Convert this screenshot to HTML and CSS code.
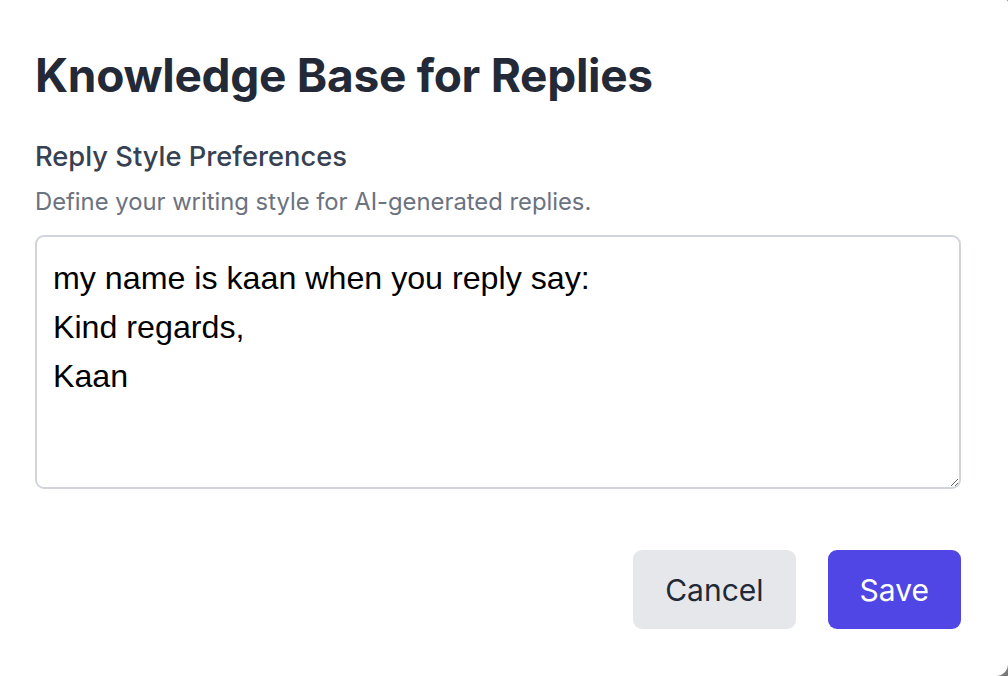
FILE: index.html
```html
<!DOCTYPE html>
<html lang="en">
<head>
<meta charset="utf-8">
<title>Knowledge Base for Replies</title>
<link rel="stylesheet" href="styles.css">
</head>
<body>
<div class="dialog">
  <h1 class="title">Knowledge Base for Replies</h1>
  <div class="field">
    <label class="label" for="style">Reply Style Preferences</label>
    <p class="hint">Define your writing style for AI-generated replies.</p>
    <textarea id="style" class="input">my name is kaan when you reply say:
Kind regards,
Kaan</textarea>
  </div>
  <div class="actions">
    <button class="btn btn-cancel">Cancel</button>
    <button class="btn btn-save">Save</button>
  </div>
</div>
</body>
</html>
```

FILE: styles.css
```css
html, body {
  margin: 0;
  padding: 0;
  height: 100%;
}
body {
  background: #7a7a7a;
  font-family: Inter, "Liberation Sans", sans-serif;
}
.dialog {
  box-sizing: border-box;
  width: 1008px;
  height: 676px;
  background: #ffffff;
  border-top-right-radius: 2px;
  border-bottom-right-radius: 12px;
  padding: 47px 47px 0 35px;
  display: flex;
  flex-direction: column;
}
.title {
  margin: 0;
  font-size: 46px;
  line-height: 56px;
  font-weight: 700;
  color: #232936;
  letter-spacing: -0.28px;
}
.field {
  margin-top: 36px;
  display: flex;
  flex-direction: column;
}
.label {
  font-size: 27.3px;
  line-height: 36px;
  font-weight: 500;
  color: #374151;
}
.hint {
  margin: 11px 0 0;
  font-size: 23.8px;
  line-height: 32px;
  color: #6b7280;
}
.input {
  margin-top: 17px;
  box-sizing: border-box;
  width: 926px;
  height: 254px;
  border: 2px solid #d1d5db;
  border-radius: 9px;
  padding: 17px 16px;
  font-family: "Liberation Sans", Arial, sans-serif;
  font-size: 32.2px;
  line-height: 49px;
  color: #000000;
  resize: vertical;
  outline: none;
}
.actions {
  margin-top: 61px;
  display: flex;
  justify-content: flex-end;
  gap: 32px;
}
.btn {
  height: 79px;
  border: none;
  border-radius: 9px;
  padding: 0 32px;
  font-family: Inter, "Liberation Sans", sans-serif;
  font-size: 30px;
  cursor: pointer;
}
.btn-cancel {
  background: #e5e7eb;
  color: #1f2937;
}
.btn-save {
  background: #4f46e5;
  color: #ffffff;
}
```
